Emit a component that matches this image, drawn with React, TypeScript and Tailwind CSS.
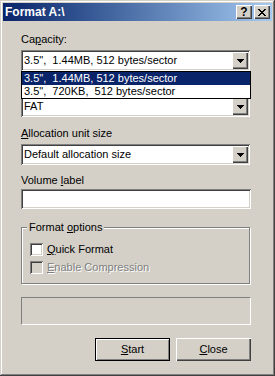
import React from 'react'

const sunken =
  'shadow-[inset_1px_1px_#808080,inset_-1px_-1px_#ffffff,inset_2px_2px_#404040,inset_-2px_-2px_#d4d0c8]'
const raised =
  'shadow-[inset_1px_1px_#ffffff,inset_-1px_-1px_#404040,inset_-2px_-2px_#808080]'

const DownArrow = () => (
  <svg width="7" height="4" shapeRendering="crispEdges">
    <rect x="0" y="0" width="7" height="1" fill="#000" />
    <rect x="1" y="1" width="5" height="1" fill="#000" />
    <rect x="2" y="2" width="3" height="1" fill="#000" />
    <rect x="3" y="3" width="1" height="1" fill="#000" />
  </svg>
)

const CloseGlyph = () => {
  const px = [
    [0, 0], [1, 0], [6, 0], [7, 0],
    [1, 1], [2, 1], [5, 1], [6, 1],
    [2, 2], [3, 2], [4, 2], [5, 2],
    [3, 3], [4, 3],
    [2, 4], [3, 4], [4, 4], [5, 4],
    [1, 5], [2, 5], [5, 5], [6, 5],
    [0, 6], [1, 6], [6, 6], [7, 6],
  ]
  return (
    <svg width="8" height="7" shapeRendering="crispEdges">
      {px.map(([x, y]) => (
        <rect key={`${x}-${y}`} x={x} y={y} width="1" height="1" fill="#000" />
      ))}
    </svg>
  )
}

const Combo = ({ value }: { value: string }) => (
  <div className={`flex h-[21px] w-[229px] items-center bg-white p-[2px] ${sunken}`}>
    <span className="flex-1 whitespace-pre pl-[1px]">{value}</span>
    <div className={`flex h-[17px] w-[16px] items-center justify-center bg-[#d4d0c8] ${raised}`}>
      <DownArrow />
    </div>
  </div>
)

const Checkbox = ({ label, accel, disabled }: { label: string; accel: string; disabled?: boolean }) => (
  <div className="flex items-center">
    <div className={`h-[13px] w-[13px] ${disabled ? 'bg-[#d4d0c8]' : 'bg-white'} ${sunken}`} />
    <span
      className={`ml-[4px] ${disabled ? 'text-[#808080] [text-shadow:1px_1px_0_#ffffff]' : 'text-black'}`}
    >
      <u>{accel}</u>
      {label}
    </span>
  </div>
)

export default function App() {
  return (
    <div
      className={`flex h-[376px] w-[275px] flex-col bg-[#d4d0c8] p-[3px] font-['Liberation_Sans',Arial,sans-serif] text-[11px] leading-[13px] text-black shadow-[inset_-1px_-1px_#404040,inset_1px_1px_#d4d0c8,inset_-2px_-2px_#808080,inset_2px_2px_#ffffff]`}
    >
      {/* title bar */}
      <div className="flex h-[18px] items-center bg-linear-to-r from-[#0a246a] to-[#a6caf0] pl-[2px] pr-[2px]">
        <span className="flex-1 text-[12px] font-bold leading-[18px] text-white">Format A:\</span>
        <div className={`flex h-[14px] w-[16px] items-center justify-center bg-[#d4d0c8] ${raised}`}>
          <span className="text-[12px] font-bold leading-[14px]">?</span>
        </div>
        <div className={`ml-[2px] flex h-[14px] w-[16px] items-center justify-center bg-[#d4d0c8] ${raised}`}>
          <CloseGlyph />
        </div>
      </div>

      <div className="flex flex-col pl-[18px]">
        <div className="mt-[12px]">
          Ca<u>p</u>acity:
        </div>
        <div className="relative mt-[4px]">
          <Combo value={'3.5",  1.44MB, 512 bytes/sector'} />
          {/* open list of the capacity combo */}
          <div className="absolute left-0 top-[21px] z-10 flex h-[28px] w-[230px] flex-col border border-black bg-white">
            <div className="h-[13px] whitespace-pre bg-[#0a246a] pl-[2px] text-white">
              3.5",  1.44MB, 512 bytes/sector
            </div>
            <div className="h-[13px] whitespace-pre pl-[2px]">3.5",  720KB,  512 bytes/sector</div>
          </div>
        </div>

        <div className="mt-[25px]">
          <Combo value="FAT" />
        </div>

        <div className="mt-[10px]">
          <u>A</u>llocation unit size
        </div>
        <div className="mt-[4px]">
          <Combo value="Default allocation size" />
        </div>

        <div className="mt-[9px]">
          Volume <u>l</u>abel
        </div>
        <div className={`mt-[2px] h-[20px] w-[230px] bg-white ${sunken}`} />

        <div className="relative mt-[18px] h-[57px] w-[229px] border border-[#808080] shadow-[inset_1px_1px_#ffffff,1px_1px_#ffffff]">
          <span className="absolute left-[5px] top-[-7px] bg-[#d4d0c8] px-[2px]">
            Format <u>o</u>ptions
          </span>
          <div className="flex flex-col gap-[5px] pl-[8px] pt-[15px]">
            <Checkbox accel="Q" label="uick Format" />
            <Checkbox accel="E" label="nable Compression" disabled />
          </div>
        </div>

        <div className="mt-[13px] h-[28px] w-[230px] border border-t-[#808080] border-l-[#808080] border-b-white border-r-white" />

        <div className="mt-[13px] flex w-[230px] justify-end gap-[6px]">
          <button
            className={`flex h-[23px] w-[75px] items-center justify-center border border-black bg-[#d4d0c8] shadow-[inset_1px_1px_#ffffff,inset_-1px_-1px_#808080]`}
          >
            <u>S</u>tart
          </button>
          <button className={`flex h-[23px] w-[75px] items-center justify-center bg-[#d4d0c8] ${raised}`}>
            <u>C</u>lose
          </button>
        </div>
      </div>
    </div>
  )
}
